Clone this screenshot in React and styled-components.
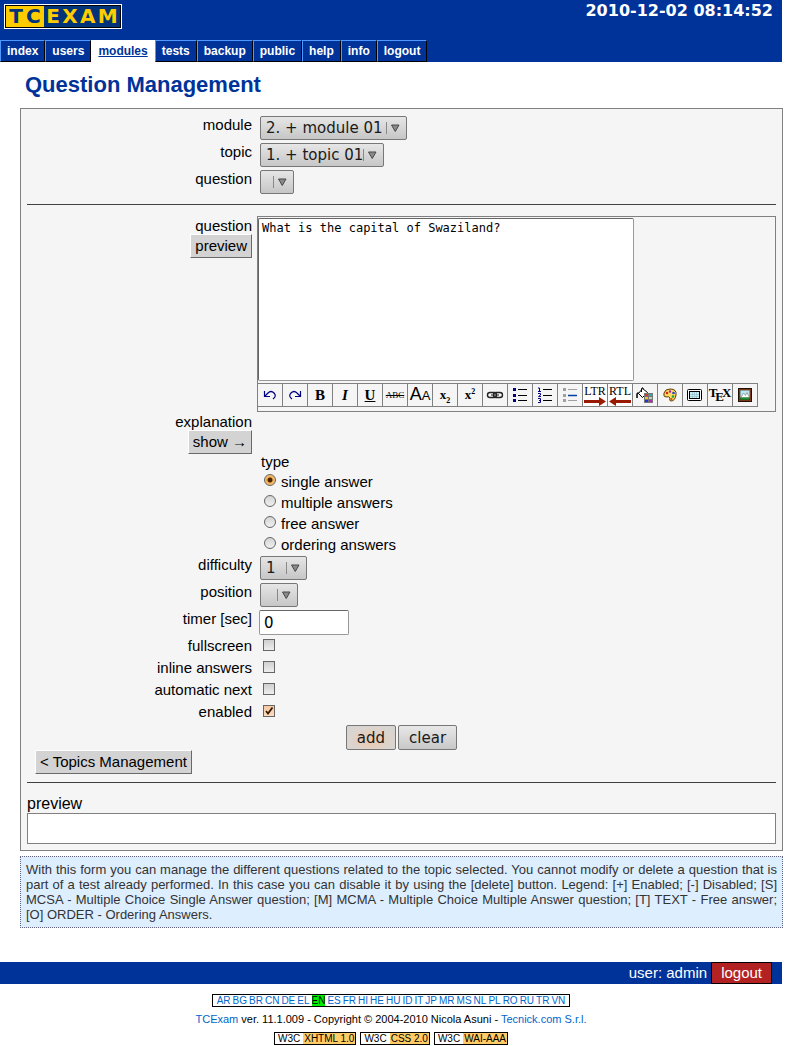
import React, { useState } from "react";
import styled, { createGlobalStyle, css } from "styled-components";

const sans = '"Liberation Sans", Arial, sans-serif';
const ui = '"DejaVu Sans", Verdana, sans-serif';
const serif = '"Liberation Serif", "Times New Roman", serif';

const GlobalStyle = createGlobalStyle`
  *, *::before, *::after { box-sizing: border-box; }
  body {
    margin: 0;
    background: #fff;
    color: #000;
    font: 15px/18px ${sans};
  }
  button, input, select, textarea { margin: 0; font: inherit; color: inherit; }
`;

const Page = styled.div`
  padding-right: 7px;
`;

const Header = styled.header`
  display: flex;
  flex-direction: column;
  justify-content: space-between;
  height: 62px;
  background: #003399;
`;

const TopBar = styled.div`
  display: flex;
  justify-content: space-between;
  align-items: flex-start;
  padding: 2px 9px 0 4px;
`;

const Logo = styled.a`
  display: flex;
  width: 118px;
  height: 25px;
  margin-top: 2px;
  border: 1px solid #fff;
  outline-offset: -2px;
  outline: 1px solid #000;
  padding: 1px;
  text-decoration: none;
  font: bold 20px/21px ${ui};
`;

const LogoPart = styled.span`
  display: flex;
  justify-content: space-evenly;
  flex: ${(p) => p.$grow};
  background: ${(p) => (p.$light ? "#ffcc00" : "#003377")};
  color: ${(p) => (p.$light ? "#003377" : "#ffcc00")};
`;

const Clock = styled.time`
  color: #fff;
  font: bold 16px/18px ${ui};
`;

const Nav = styled.nav`
  display: flex;
`;

const Tab = styled.a`
  height: 22px;
  padding: 0 6px;
  border: 1px solid;
  border-color: #4d99ff #000 #000 #4d99ff;
  background: #003399;
  color: #fff;
  font: bold 12px/20px ${sans};
  text-decoration: none;
  ${(p) =>
    p.$active &&
    css`
      border-color: #fff;
      background: #fff;
      color: #003399;
      text-decoration: underline;
    `}
`;

const Main = styled.main`
  margin-right: -1px;
  padding-left: 20px;
`;

const Title = styled.h1`
  margin: 0;
  padding: 10px 5px;
  color: #003399;
  font: bold 22px/26px ${sans};
`;

const Panel = styled.form`
  display: flex;
  flex-direction: column;
  padding: 7px 6px 6px;
  border: 1px solid #808080;
  background: #f5f5f5;
`;

const Rows = styled.div`
  display: flex;
  flex-direction: column;
  gap: ${(p) => p.$gap || 0}px;
  padding-top: ${(p) => p.$top || 0}px;
`;

const Row = styled.div`
  display: grid;
  grid-template-columns: 225px minmax(0, 1fr);
  column-gap: ${(p) => p.$gap || 8}px;
  align-items: start;
  min-height: ${(p) => p.$height || 0}px;
`;

const Label = styled.label`
  text-align: right;
`;

const LabelStack = styled.div`
  display: flex;
  flex-direction: column;
  align-items: flex-end;
  padding-top: 2px;
  line-height: 16px;
`;

const Rule = styled.hr`
  width: 100%;
  height: 1px;
  margin: ${(p) => p.$top}px 0 ${(p) => p.$bottom}px;
  border: 0;
  background: #404040;
`;

const FlatButton = styled.button`
  height: 24px;
  padding: 0 4px;
  border: 1px solid;
  border-color: #fff #696969 #696969 #fff;
  background: #d3d3d3;
  line-height: 20px;
`;

const FlatLink = styled.a`
  align-self: flex-start;
  height: 24px;
  margin-left: 8px;
  padding: 0 4px;
  border: 1px solid;
  border-color: #fff #696969 #696969 #fff;
  background: #d3d3d3;
  color: #000;
  line-height: 22px;
  text-decoration: none;
`;

const SelectShell = styled.span`
  display: inline-grid;
  justify-self: start;
  > * { grid-area: 1 / 1; }
  > svg { justify-self: end; pointer-events: none; }
`;

const SelectBox = styled.select`
  appearance: none;
  width: ${(p) => p.$width}px;
  height: 24px;
  padding: 0 0 0 5px;
  border: 1px solid #777;
  border-radius: 2px;
  background: linear-gradient(#e6e6e6, #c6c6c6);
  color: #1a1a1a;
  font: 15px/20px ${ui};
`;

function Select({ id, width, options }) {
  return (
    <SelectShell>
      <SelectBox id={id} $width={width}>
        {options.map((o) => (
          <option key={o}>{o}</option>
        ))}
      </SelectBox>
      <svg width="22" height="24" aria-hidden="true">
        <path d="M1.500 6V18" stroke="#888" />
        <path d="M6.500 9H14L10.250 15.500Z" fill="#8a8a8a" stroke="#484848" />
      </svg>
    </SelectShell>
  );
}

const Editor = styled.div`
  border: 1px solid #808080;
  padding: 1px 0 4px;
`;

const EditorText = styled.textarea`
  display: block;
  width: 376px;
  max-width: 100%;
  height: 163px;
  padding: 2px 3px;
  border: 1px solid #777;
  border-color: #666 #999 #999 #666;
  border-radius: 2px;
  background: #fff;
  resize: none;
  font: 12px/15px "DejaVu Sans Mono", monospace;
`;

const Toolbar = styled.div`
  display: flex;
  flex-wrap: wrap;
  margin-top: 2px;
`;

const Tool = styled.button`
  display: flex;
  align-items: center;
  justify-content: center;
  width: 25px;
  height: 24px;
  padding: 0;
  border: 1px solid #808080;
  border-left-width: 0;
  background: ${(p) => (p.$white ? "#fff" : "#f5f5f5")};
  svg { display: block; flex: none; }
`;

const Glyph = styled.span`
  font: ${(p) => p.$weight || "normal"} ${(p) => p.$size || 15}px/16px ${(p) => p.$face || serif};
  font-style: ${(p) => (p.$italic ? "italic" : "normal")};
  text-decoration: ${(p) => p.$line || "none"};
  sub, sup { font-size: 8px; line-height: 0; }
  small { font-size: 13px; }
`;

const DirGlyph = styled.span`
  display: flex;
  flex-direction: column;
  align-items: center;
  font: 12px/12px ${serif};
`;

const TexGlyph = styled.span`
  display: flex;
  font: bold 13px/14px ${serif};
  span { margin: 0 -2px; padding-top: 4px; }
`;

function Icon({ children, w = 20 }) {
  return (
    <svg width={w} height="18" viewBox={`0 0 ${w} 18`} fill="none" aria-hidden="true">
      {children}
    </svg>
  );
}

const listLines = "M7 3.500H16M7 9.500H16M7 14.500H16";

function Direction({ text, left }) {
  return (
    <DirGlyph>
      {text}
      <svg width="22" height="9" aria-hidden="true">
        <path
          d={left ? "M0 4.500L7 0V3H22V6H7V9Z" : "M22 4.500L15 0V3H0V6H15V9Z"}
          fill="#991a00"
        />
      </svg>
    </DirGlyph>
  );
}

const tools = [
  ["undo", <Icon><path d="M4.500 5V10.500H10M5 10L8 7Q11 4 14 7Q17 10 13 13" stroke="#000080" strokeWidth="1.200" /></Icon>],
  ["redo", <Icon><path d="M15.500 5V10.500H10M15 10L12 7Q9 4 6 7Q3 10 7 13" stroke="#000080" strokeWidth="1.200" /></Icon>],
  ["bold", <Glyph $weight="bold">B</Glyph>],
  ["italic", <Glyph $weight="bold" $italic>I</Glyph>],
  ["underline", <Glyph $weight="bold" $line="underline">U</Glyph>],
  ["strikethrough", <Glyph $size={9} $line="line-through">ABC</Glyph>],
  ["small", <Glyph $size={18} $face={sans}>A<small>A</small></Glyph>],
  ["subscript", <Glyph $size={13} $weight="bold">x<sub>2</sub></Glyph>],
  ["superscript", <Glyph $size={13} $weight="bold">x<sup>2</sup></Glyph>],
  ["link", <Icon>
    <rect x="2.500" y="6.500" width="9" height="5" rx="2.500" stroke="#222" strokeWidth="1.400" />
    <rect x="8.500" y="6.500" width="9" height="5" rx="2.500" stroke="#222" strokeWidth="1.400" />
    <path d="M6 9H14" stroke="#222" />
  </Icon>],
  ["bulleted list", <Icon w={18}>
    <path d="M2 2H5V5H2ZM2 8H5V11H2ZM2 13H5V16H2Z" fill="#000080" />
    <path d={listLines} stroke="#000" />
  </Icon>],
  ["numbered list", <Icon w={18}>
    <path d="M2 2H3.500V5M2 5.500H5M2 7.500H4.500V9L2.500 10.500H5M2 12.500H4.500V16.500H2M3 14.500H4.500" stroke="#000080" />
    <path d={listLines} stroke="#000" />
  </Icon>],
  ["list item", <Icon w={18}>
    <path d="M2 2H5V5H2ZM2 13H5V16H2ZM2 8H5V11H2Z" fill="#a0a0a0" />
    <path d="M7 3.500H16M7 14.500H16" stroke="#a0a0a0" />
    <path d="M7 9.500H16" stroke="#0040a0" strokeWidth="1.500" />
  </Icon>],
  ["left to right", <Direction text="LTR" />, true],
  ["right to left", <Direction text="RTL" left />, true],
  ["colour", <Icon>
    <path d="M7.500 2.500L3.500 7.500L7.500 11.500L12.500 6.500Z" fill="#fff" stroke="#000" />
    <path d="M6.500 6V2.500Q7.500 0.500 8.500 3" stroke="#000" />
    <path d="M3.500 6.500L2 8V12" stroke="#000" strokeWidth="1.500" />
    <rect x="9" y="7" width="9" height="10" fill="#777" />
    <path d="M10 8H13V10H10Z" fill="#e03030" /><path d="M14 8H17V10H14Z" fill="#20b0a8" />
    <path d="M10 11H13V13H10Z" fill="#f0c030" /><path d="M14 11H17V13H14Z" fill="#c8c8c8" />
    <path d="M10 14H13V16H10Z" fill="#2030e0" /><path d="M14 14H17V16H14Z" fill="#c020c0" />
  </Icon>],
  ["palette", <Icon>
    <path d="M10 3Q17 3 16 9Q15 15 11 15Q9 15 10 12Q9 10 6 11Q3 11 4 7Q5 3 10 3Z" fill="#ffdc60" stroke="#5a3c00" />
    <circle cx="7" cy="7" r="1.300" fill="#e02020" /><circle cx="10" cy="5.500" r="1.200" fill="#a020c0" />
    <circle cx="13.500" cy="7" r="1.300" fill="#2040e0" /><circle cx="13" cy="10.500" r="1.300" fill="#20a040" />
    <circle cx="11.500" cy="13" r="1.100" fill="#e04020" />
  </Icon>],
  ["object", <Icon>
    <rect x="2.500" y="3.500" width="14" height="11" rx="1" fill="#fff" stroke="#000" />
    <rect x="4.500" y="5.500" width="10" height="7" fill="#c8f0f8" stroke="#000" />
    <path d="M7.500 6V12M9.500 6V12M11.500 6V12M5 8.500H14M5 10.500H14" stroke="#8ab8c0" strokeWidth=".5" />
  </Icon>],
  ["tex", <TexGlyph>T<span>E</span>X</TexGlyph>],
  ["image", <Icon>
    <rect x="3.500" y="2.500" width="13" height="13" fill="#a04020" stroke="#201000" />
    <rect x="5" y="4" width="10" height="10" fill="#b8e8f4" />
    <path d="M6 11.500L8.500 7L10.500 9.500L12 6.500L14.500 11.500Z" fill="#fff" stroke="#777" strokeWidth=".6" />
    <path d="M5 11.500H15V14H5Z" fill="#209030" />
    <rect x="5" y="4" width="10" height="10" stroke="#402010" strokeWidth=".7" />
  </Icon>],
];

const RadioGroup = styled.fieldset`
  min-width: 0;
  margin: 0 0 0 -1px;
  padding: 0 0 2px;
  border: 0;
`;

const Legend = styled.legend`
  padding: 0 2px;
  line-height: 16px;
`;

const RadioLabel = styled.label`
  display: flex;
  align-items: center;
  gap: 5px;
  height: 21px;
  padding: 3px 0 0 5px;
`;

const Radio = styled.input`
  appearance: none;
  width: 12px;
  height: 12px;
  margin-bottom: 5px;
  border: 1px solid #666;
  border-radius: 50%;
  background: linear-gradient(#d4d4d4, #f0f0f0);
  &:checked {
    background: radial-gradient(circle, #4a2500 0 2px, #f5b45c 3px 4px, #e8c8a0 6px);
  }
`;

const CheckShell = styled.span`
  display: inline-grid;
  justify-self: start;
  margin: 2px 0 0 3px;
  > * { grid-area: 1 / 1; }
  > svg { pointer-events: none; visibility: hidden; }
  > input:checked + svg { visibility: visible; }
`;

const CheckInput = styled.input`
  appearance: none;
  width: 12px;
  height: 12px;
  border: 1px solid #666;
  background: linear-gradient(#cfcfcf, #eee);
  &:checked { background: linear-gradient(#f8c8a0, #fcdcc0); }
`;

const NumberInput = styled.input`
  width: 90px;
  height: 25px;
  margin-left: -1px;
  padding: 0 4px;
  border: 1px solid #999;
  border-top-color: #666;
  border-radius: 2px;
  background: #fff;
  font: 15px/20px ${ui};
`;

const Actions = styled.div`
  display: flex;
  justify-content: center;
  gap: 2px;
`;

const ActionButton = styled.button`
  height: 25px;
  padding: 0 10px;
  border: 1px solid #777;
  border-radius: 2px;
  background: ${(p) =>
    p.$warm
      ? "radial-gradient(ellipse at 50% 60%, #f0c8a8, #dcd4ce 60%, #d4d4d4)"
      : "linear-gradient(#e8e8e8, #c8c8c8)"};
  color: #1a1a1a;
  font: 15px/20px ${ui};
`;

const PreviewTitle = styled.h2`
  margin: 0;
  font: 16px/19px ${sans};
`;

const PreviewBox = styled.div`
  min-height: 31px;
  border: 1px solid #808080;
  background: #fff;
`;

const Help = styled.p`
  margin: 5px 0 34px;
  padding: 5px;
  border: 1px dotted #666680;
  background: #ddeeff;
  color: #333;
  font: 13px/15px ${sans};
  text-align: justify;
`;

const UserBar = styled.div`
  display: flex;
  justify-content: flex-end;
  gap: 4px;
  height: 22px;
  padding-right: 10px;
  background: #003399;
  color: #fff;
  line-height: 22px;
`;

const Logout = styled.a`
  padding: 0 9px;
  border: 1px solid #000;
  background: #b22222;
  color: #fff;
  line-height: 20px;
  text-decoration: none;
`;

const Footer = styled.footer`
  display: flex;
  flex-direction: column;
  align-items: center;
  padding-top: 10px;
  font: 11px/13px ${sans};
  a { color: #0066cc; text-decoration: none; }
`;

const Languages = styled.nav`
  display: flex;
  gap: 2px;
  height: 13px;
  padding: 0 4px;
  border: 1px solid #000;
  font: 10px/11px ${sans};
`;

const Lang = styled.a`
  && {
    color: ${(p) => (p.$active ? "#000" : "#0066cc")};
    background: ${(p) => (p.$active ? "#00ee00" : "transparent")};
  }
`;

const Copyright = styled.p`
  margin: 6px 0;
`;

const Badges = styled.div`
  display: flex;
  gap: 4px;
`;

const Badge = styled.a`
  && {
    display: flex;
    height: 13px;
    border: 1px solid #000;
    color: #000;
    font: 10px/11px ${sans};
  }
  span { padding: 0 3px; }
  span + span { padding: 0 1px; background: #ffcc66; }
`;

const menu = ["index", "users", "modules", "tests", "backup", "public", "help", "info", "logout"];
const answerTypes = ["single answer", "multiple answers", "free answer", "ordering answers"];
const flags = ["fullscreen", "inline answers", "automatic next", "enabled"];
const languages = "AR BG BR CN DE EL EN ES FR HI HE HU ID IT JP MR MS NL PL RO RU TR VN".split(" ");
const badges = ["XHTML 1.0", "CSS 2.0", "WAI-AAA"];

export default function App() {
  const [type, setType] = useState("single answer");
  return (
    <Page>
      <GlobalStyle />
      <Header>
        <TopBar>
          <Logo href="#" aria-label="TCExam">
            <LogoPart $light $grow="0 0 38px"><span>T</span><span>C</span></LogoPart>
            <LogoPart $grow="1"><span>E</span><span>X</span><span>A</span><span>M</span></LogoPart>
          </Logo>
          <Clock>2010-12-02 08:14:52</Clock>
        </TopBar>
        <Nav>
          {menu.map((m) => (
            <Tab key={m} href="#" $active={m === "modules"}>{m}</Tab>
          ))}
        </Nav>
      </Header>

      <Main>
        <Title>Question Management</Title>
        <Panel onSubmit={(e) => e.preventDefault()}>
          <Rows $gap={3}>
            <Row><Label htmlFor="module">module</Label><Select id="module" width={147} options={["2. + module 01"]} /></Row>
            <Row><Label htmlFor="topic">topic</Label><Select id="topic" width={124} options={["1. + topic 01"]} /></Row>
            <Row><Label htmlFor="item">question</Label><Select id="item" width={34} options={[""]} /></Row>
          </Rows>
          <Rule $top={10} $bottom={11} />

          <Row $gap={5}>
            <LabelStack>
              <Label htmlFor="text">question</Label>
              <FlatButton type="button">preview</FlatButton>
            </LabelStack>
            <Editor>
              <EditorText id="text" defaultValue="What is the capital of Swaziland?" />
              <Toolbar>
                {tools.map(([name, art, white]) => (
                  <Tool key={name} type="button" title={name} aria-label={name} $white={white}>{art}</Tool>
                ))}
              </Toolbar>
            </Editor>
          </Row>
          <Row>
            <LabelStack>
              <Label as="span">explanation</Label>
              <FlatButton type="button">show →</FlatButton>
            </LabelStack>
          </Row>

          <Row>
            <span />
            <RadioGroup>
              <Legend>type</Legend>
              {answerTypes.map((t) => (
                <RadioLabel key={t}>
                  <Radio type="radio" name="type" checked={type === t} onChange={() => setType(t)} />
                  {t}
                </RadioLabel>
              ))}
            </RadioGroup>
          </Row>

          <Rows $gap={3}>
            <Row><Label htmlFor="difficulty">difficulty</Label><Select id="difficulty" width={47} options={["1"]} /></Row>
            <Row><Label htmlFor="position">position</Label><Select id="position" width={38} options={[""]} /></Row>
            <Row $height={25}><Label htmlFor="timer">timer [sec]</Label><NumberInput id="timer" type="text" defaultValue="0" /></Row>
          </Rows>
          <Rows $top={2}>
            {flags.map((f) => (
              <Row key={f} $height={22}>
                <Label htmlFor={f}>{f}</Label>
                <CheckShell>
                  <CheckInput id={f} type="checkbox" defaultChecked={f === "enabled"} />
                  <svg width="12" height="12" aria-hidden="true">
                    <path d="M3 6L5 8.500L9.500 2.500" stroke="#331a00" strokeWidth="1.800" fill="none" />
                  </svg>
                </CheckShell>
              </Row>
            ))}
          </Rows>

          <Actions>
            <ActionButton type="submit" $warm>add</ActionButton>
            <ActionButton type="reset">clear</ActionButton>
          </Actions>
          <FlatLink href="#">&lt; Topics Management</FlatLink>
          <Rule $top={8} $bottom={11} />
          <PreviewTitle>preview</PreviewTitle>
          <PreviewBox />
        </Panel>
        <Help>
          With this form you can manage the different questions related to the topic selected. You cannot
          modify or delete a question that is part of a test already performed. In this case you can disable
          it by using the [delete] button. Legend: [+] Enabled; [-] Disabled; [S] MCSA - Multiple Choice
          Single Answer question; [M] MCMA - Multiple Choice Multiple Answer question; [T] TEXT - Free
          answer; [O] ORDER - Ordering Answers.
        </Help>
      </Main>

      <UserBar>
        <span>user: admin</span>
        <Logout href="#">logout</Logout>
      </UserBar>
      <Footer>
        <Languages>
          {languages.map((l) => (
            <Lang key={l} href="#" $active={l === "EN"}>{l}</Lang>
          ))}
        </Languages>
        <Copyright>
          <a href="#">TCExam</a> ver. 11.1.009 - Copyright © 2004-2010 Nicola Asuni - <a href="#">Tecnick.com S.r.l.</a>
        </Copyright>
        <Badges>
          {badges.map((b) => (
            <Badge key={b} href="#"><span>W3C</span><span>{b}</span></Badge>
          ))}
        </Badges>
      </Footer>
    </Page>
  );
}
